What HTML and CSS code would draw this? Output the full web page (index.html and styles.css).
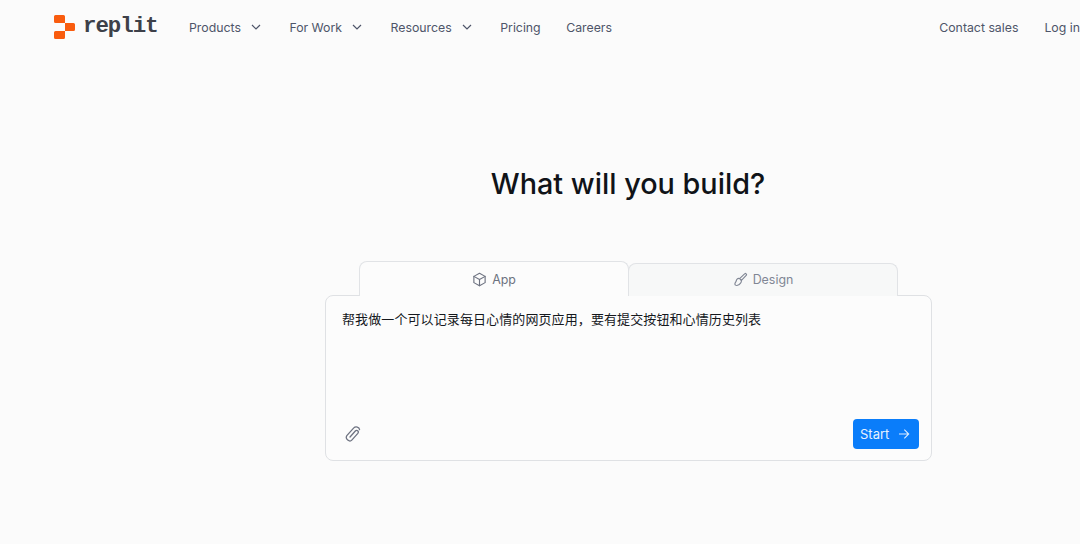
FILE: index.html
```html
<!DOCTYPE html>
<html lang="en">
<head>
<meta charset="utf-8">
<title>Replit</title>
<link rel="stylesheet" href="styles.css">
</head>
<body>
<header class="nav">
  <a class="logo">
    <svg class="logo-mark" width="21" height="24" viewBox="0 0 21 24"><path fill="#f95c0e" d="M0 1.500A1.500 1.500 0 0 1 1.500 0h8A1.500 1.500 0 0 1 11 1.500V8H1.500A1.500 1.500 0 0 1 0 6.500zM11 8h8.500A1.500 1.500 0 0 1 21 9.500v5a1.500 1.500 0 0 1-1.500 1.500H11zM1.500 16H11v6.500A1.500 1.500 0 0 1 9.500 24h-8A1.500 1.500 0 0 1 0 22.500v-5A1.500 1.500 0 0 1 1.500 16z"/></svg>
    <span class="logo-text">replit</span>
  </a>
  <nav class="nav-main">
    <a class="nav-item nav-menu">Products <svg class="chev" width="10" height="6" viewBox="0 0 10 6"><path d="M1 1l4 4 4-4"/></svg></a>
    <a class="nav-item nav-menu">For Work <svg class="chev" width="10" height="6" viewBox="0 0 10 6"><path d="M1 1l4 4 4-4"/></svg></a>
    <a class="nav-item nav-menu">Resources <svg class="chev" width="10" height="6" viewBox="0 0 10 6"><path d="M1 1l4 4 4-4"/></svg></a>
    <a class="nav-item">Pricing</a>
    <a class="nav-item">Careers</a>
  </nav>
  <nav class="nav-right">
    <a class="nav-item">Contact sales</a>
    <a class="nav-item">Log in</a>
  </nav>
</header>
<main class="main">
  <h1 class="title">What will you build?</h1>
  <div class="tabs">
    <div class="tab tab-active">
      <svg class="tab-icon" width="15" height="15" viewBox="0 0 24 24"><path d="M12 2l9 5v10l-9 5-9-5V7z"/><path d="M3 7l9 5 9-5M12 12v10"/></svg>
      App
    </div>
    <div class="tab tab-idle">
      <svg class="tab-icon" width="15" height="15" viewBox="0 0 24 24"><path d="M19 2.500c1-1 3.500 1.500 2.500 2.500l-8 8.500-3-3z"/><path d="M10.500 10.500c-1.500-.5-3 0-4 1-1.500 1.500-1 3.500-2.500 5-1 1-1.500 3.500 0 4.500 1.500 1 3.500.5 5-.5 2-1.500 3-2 4-4 .8-1.500.5-2.500 0-3.500"/></svg>
      Design
    </div>
  </div>
  <section class="card">
    <p class="prompt">帮我做一个可以记录每日心情的网页应用，要有提交按钮和心情历史列表</p>
    <div class="card-foot">
      <svg class="clip" width="17" height="17" viewBox="0 0 24 24"><path d="M8.500 15.500L16 7c2-2.300 5.700.5 3.500 3.500L11 20c-3 3.300-10-1.500-7-6.500L13.500 3c3-3 8-1.500 8.500 2"/></svg>
      <button class="start">Start
        <svg width="12" height="12" viewBox="0 0 12 12"><path d="M1 6h10M6.500 1.500L11 6l-4.500 4.500"/></svg>
      </button>
    </div>
  </section>
</main>
</body>
</html>
```
FILE: styles.css
```css
* { box-sizing: border-box; }
html, body { margin: 0; height: 100%; }
body {
  background: #fbfbfb;
  font-family: "Inter", "Noto Sans", "Noto Sans CJK SC", sans-serif;
  overflow: hidden;
  width: 1080px;
  height: 544px;
}
.nav {
  display: flex;
  align-items: center;
  height: 54px;
  padding-left: 54px;
  font-size: 12.3px;
  color: #4e5569;
}
.logo { display: flex; align-items: center; gap: 8px; width: 135px; }
.logo-mark { display: block; flex: none; }
.logo-text {
  font-family: "Liberation Mono", monospace;
  font-weight: 700;
  font-size: 22.4px;
  letter-spacing: -1px;
  color: #3d4049;
  position: relative;
  top: -1px;
}
.nav-main { display: flex; gap: 25.5px; }
.nav-item { display: flex; align-items: center; white-space: nowrap; }
.nav-menu { margin-right: 3px; }
.chev { margin-left: 10px; fill: none; stroke: #4e5569; stroke-width: 1.200; }
.nav-right { display: flex; gap: 26px; margin-left: auto; }
.main { padding-left: 325px; }
.title {
  width: 606px;
  margin: 109px 0 0;
  text-align: center;
  font-size: 28.8px;
  line-height: 42px;
  font-weight: 500;
  color: #101318;
}
.tabs { display: flex; align-items: flex-end; height: 35px; margin: 56px 0 -1px 34px; position: relative; }
.tab {
  width: 270px;
  display: flex;
  align-items: center;
  justify-content: center;
  gap: 5px;
  border: 1px solid #e1e3e6;
  border-bottom: 0;
  font-size: 12.4px;
  border-radius: 8px 8px 0 0;
}
.tab-active { height: 35px; background: #fcfcfc; color: #6d7280; margin-right: -1px; position: relative; z-index: 1; }
.tab-idle { height: 33px; padding-bottom: 2px; background: #f7f8f8; color: #808694; }
.tab-icon { fill: none; stroke: currentColor; stroke-width: 1.800; stroke-linejoin: round; stroke-linecap: round; }
.card {
  width: 607px;
  height: 166px;
  background: #fcfcfc;
  border: 1px solid #dfe1e4;
  border-radius: 8px;
  padding: 14px 11px 11px 16px;
  display: flex;
  flex-direction: column;
  justify-content: space-between;
}
.prompt {
  margin: 0;
  font-family: "Noto Sans CJK SC", sans-serif;
  font-size: 13px;
  letter-spacing: 0.1px;
  line-height: 17px;
  color: #15181d;
}
.card-foot { display: flex; justify-content: space-between; align-items: center; }
.clip { margin-left: 2px; fill: none; stroke: #6d7280; stroke-width: 1.800; stroke-linecap: round; }
.start {
  display: flex;
  align-items: center;
  gap: 9px;
  width: 66px;
  height: 30px;
  margin-right: 1px;
  padding: 0 9px 0 7px;
  border: 0;
  border-radius: 4px;
  background: #0a7dfa;
  color: #e6f1ff;
  font: 13px "Inter", "Noto Sans", sans-serif;
}
.start svg { fill: none; stroke: #dcecff; stroke-width: 1.100; }
```
